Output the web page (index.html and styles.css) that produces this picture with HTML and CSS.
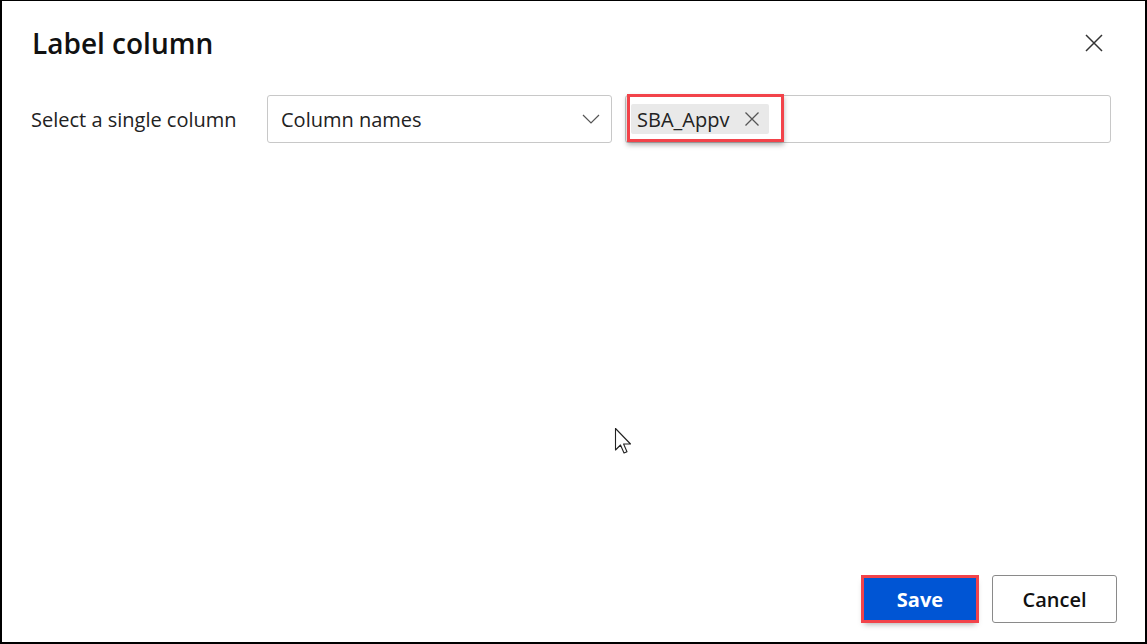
FILE: index.html
```html
<!DOCTYPE html>
<html>
<head>
<meta charset="utf-8">
<link rel="stylesheet" href="styles.css">
</head>
<body>
<div class="dialog">
  <div class="header">
    <h1 class="title">Label column</h1>
    <button class="close" aria-label="Close">
      <svg width="18" height="18" viewBox="0 0 18 18"><path d="M1 1L17 17M17 1L1 17" stroke="#333" stroke-width="1.5" fill="none"/></svg>
    </button>
  </div>
  <div class="row">
    <span class="label">Select a single column</span>
    <div class="dropdown">
      <span>Column names</span>
      <svg class="chev" width="18" height="10" viewBox="0 0 18 10"><path d="M1 1L9 9L17 1" stroke="#555" stroke-width="1.2" fill="none"/></svg>
    </div>
    <div class="taginput">
      <span class="chip">SBA_Appv
        <svg width="16" height="16" viewBox="0 0 16 16"><path d="M1.5 1.5L14.5 14.5M14.5 1.5L1.5 14.5" stroke="#555" stroke-width="1.3" fill="none"/></svg>
      </span>
      <div class="highlight"></div>
    </div>
  </div>
  <div class="body">
    <svg class="cursor" width="20" height="30" viewBox="0 0 20 30"><path d="M1.5 1.5L1.5 23L6.5 18L10 26L13 24.7L9.6 17L16.5 17Z" fill="#fff" stroke="#222" stroke-width="1.1" stroke-linejoin="round"/></svg>
  </div>
  <div class="footer">
    <button class="btn primary">Save</button>
    <button class="btn secondary">Cancel</button>
  </div>
</div>
</body>
</html>
```
FILE: styles.css
```css
html, body {
  margin: 0;
  padding: 0;
  background: #fff;
}
body {
  font-family: "Open Sans", "Noto Sans", sans-serif;
  color: #1b1b1b;
}
.dialog {
  width: 1147px;
  height: 644px;
  box-sizing: border-box;
  border-style: solid;
  border-color: #000;
  border-width: 1px 2px 2px 2px;
  display: flex;
  flex-direction: column;
  position: relative;
}
.header {
  display: flex;
  align-items: center;
  justify-content: space-between;
  padding: 24px 42px 0 30px;
  height: 36px;
}
.title {
  margin: 0;
  font-size: 28px;
  font-weight: 600;
  line-height: 36px;
  color: #111;
}
.close {
  border: none;
  background: none;
  padding: 0;
  width: 18px;
  height: 18px;
  display: flex;
}
.row {
  display: flex;
  align-items: center;
  padding: 34px 34px 0 29px;
}
.label {
  width: 236px;
  font-size: 20px;
  color: #222;
}
.dropdown {
  width: 345px;
  height: 48px;
  box-sizing: border-box;
  border: 1px solid #c8c8c8;
  border-radius: 3px;
  display: flex;
  align-items: center;
  justify-content: space-between;
  padding: 0 11px 0 13px;
  font-size: 20px;
  color: #222;
}
.chev {
  display: block;
}
.taginput {
  position: relative;
  margin-left: 13px;
  flex: 1;
  height: 48px;
  box-sizing: border-box;
  border: 1px solid #c8c8c8;
  border-radius: 3px;
  display: flex;
  align-items: center;
  padding-left: 5px;
}
.chip {
  display: flex;
  align-items: center;
  gap: 15px;
  background: #e9e9e9;
  border-radius: 2px;
  height: 30px;
  padding: 0 9px 0 6px;
  font-size: 20px;
  color: #222;
}
.highlight {
  position: absolute;
  left: 1px;
  top: -2px;
  width: 157px;
  height: 48px;
  box-sizing: border-box;
  border: 3px solid #f2434a;
  box-shadow: 0 3px 5px rgba(0,0,0,0.3);
}
.body {
  flex: 1;
  position: relative;
}
.cursor {
  position: absolute;
  left: 612px;
  top: 284px;
}
.footer {
  display: flex;
  justify-content: flex-end;
  align-items: center;
  gap: 16px;
  padding: 0 28px 19px 0;
}
.btn {
  font-family: inherit;
  font-size: 20px;
  height: 48px;
  border-radius: 3px;
  cursor: pointer;
}
.primary {
  width: 112px;
  height: 42px;
  background: #0055d4;
  color: #fff;
  font-weight: 700;
  border: none;
  border-radius: 0;
  outline: 3px solid #f2434a;
  box-shadow: 0 4px 6px rgba(0,0,0,0.35);
}
.secondary {
  width: 125px;
  background: #fff;
  color: #111;
  font-weight: 600;
  border: 1px solid #8a8a8a;
}
```
